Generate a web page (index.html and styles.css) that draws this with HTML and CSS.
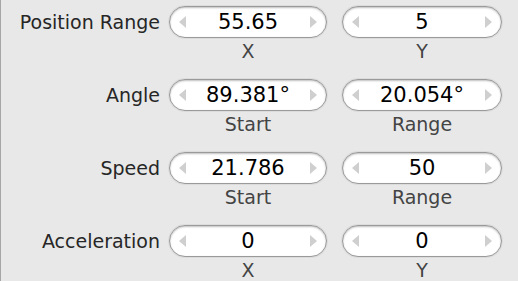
FILE: index.html
```html
<!DOCTYPE html>
<html>
<head>
    <title>Emitter Settings</title>
    <link rel="stylesheet" href="styles.css">
</head>
<body>
    <div class="panel">
        <div class="row">
            <div class="row-label">Position Range</div>
            <div class="field-group">
                <div class="stepper"><span class="arrow left"></span><span class="value">55.65</span><span class="arrow right"></span></div>
                <div class="caption">X</div>
            </div>
            <div class="field-group wide">
                <div class="stepper"><span class="arrow left"></span><span class="value">5</span><span class="arrow right"></span></div>
                <div class="caption">Y</div>
            </div>
        </div>

        <div class="row">
            <div class="row-label">Angle</div>
            <div class="field-group">
                <div class="stepper"><span class="arrow left"></span><span class="value">89.381°</span><span class="arrow right"></span></div>
                <div class="caption">Start</div>
            </div>
            <div class="field-group wide">
                <div class="stepper"><span class="arrow left"></span><span class="value">20.054°</span><span class="arrow right"></span></div>
                <div class="caption">Range</div>
            </div>
        </div>

        <div class="row">
            <div class="row-label">Speed</div>
            <div class="field-group">
                <div class="stepper"><span class="arrow left"></span><span class="value">21.786</span><span class="arrow right"></span></div>
                <div class="caption">Start</div>
            </div>
            <div class="field-group wide">
                <div class="stepper"><span class="arrow left"></span><span class="value">50</span><span class="arrow right"></span></div>
                <div class="caption">Range</div>
            </div>
        </div>

        <div class="row">
            <div class="row-label">Acceleration</div>
            <div class="field-group">
                <div class="stepper"><span class="arrow left"></span><span class="value">0</span><span class="arrow right"></span></div>
                <div class="caption">X</div>
            </div>
            <div class="field-group wide">
                <div class="stepper"><span class="arrow left"></span><span class="value">0</span><span class="arrow right"></span></div>
                <div class="caption">Y</div>
            </div>
        </div>
    </div>
</body>
</html>
```

FILE: styles.css
```css
html, body {
    margin: 0;
    height: 100%;
}
body {
    background: #e8e8e8;
    border-left: 1px solid #a6a6a6;
    box-sizing: border-box;
    font-family: "DejaVu Sans", sans-serif;
    overflow: hidden;
}
.panel {
    padding-top: 6px;
    display: flex;
    flex-direction: column;
    gap: 16px;
}
.row {
    display: flex;
    align-items: flex-start;
}
.row-label {
    width: 159px;
    padding-right: 9px;
    text-align: right;
    font-size: 19px;
    line-height: 32px;
    color: #262626;
}
.field-group {
    width: 158px;
    margin-right: 15px;
}
.field-group.wide {
    width: 160px;
    margin-right: 0;
}
.stepper {
    height: 32px;
    box-sizing: border-box;
    border: 1px solid #9a9a9a;
    border-radius: 16px;
    background: #fff;
    box-shadow: inset 0 1px 2px rgba(0, 0, 0, 0.25), 0 0 0 1px rgba(0, 0, 0, 0.05);
    display: flex;
    align-items: center;
    padding: 0 9px;
}
.value {
    flex: 1;
    text-align: center;
    font-size: 21px;
    color: #000;
}
.arrow {
    width: 0;
    height: 0;
    border-top: 6px solid transparent;
    border-bottom: 6px solid transparent;
}
.arrow.left {
    border-right: 7px solid #cfcfcf;
}
.arrow.right {
    border-left: 7px solid #cfcfcf;
}
.caption {
    text-align: center;
    font-size: 19px;
    line-height: 24px;
    margin-top: 1px;
    color: #444;
}
```
